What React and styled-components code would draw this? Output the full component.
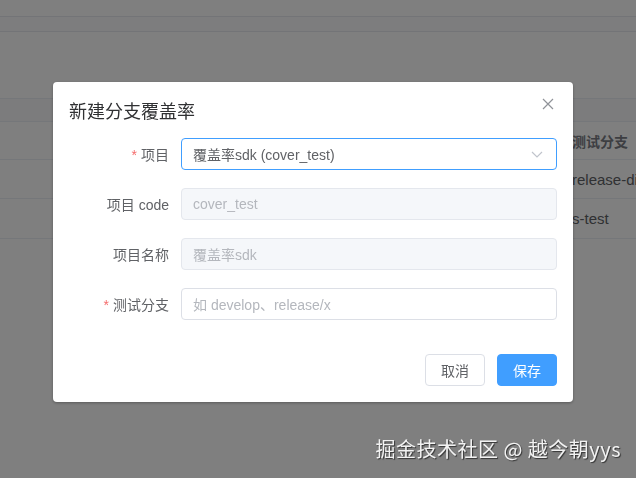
import styled, { createGlobalStyle } from "styled-components"

const GlobalStyle = createGlobalStyle`
    html, body {
        margin: 0;
        padding: 0;
        overflow: hidden;
        background: #fff;
        font-family: "Liberation Sans", "Noto Sans CJK SC", sans-serif;
    }
`

const Page = styled.div`
    width: 636px;
    height: 478px;
    background: #fff;
`
const TopBar = styled.div`
    height: 16px;
    border-bottom: 1px solid #e6e8ee;
`
const TabStrip = styled.div`
    height: 14px;
    border-bottom: 1px solid #e6e8ee;
    background: #fafbfc;
`
const Table = styled.div`
    margin-top: 66px;
    border-top: 1px solid #ebeef5;
`
const Row = styled.div`
    display: grid;
    grid-template-columns: 1fr 76px;
    height: ${(p) => p.$h}px;
    border-bottom: 1px solid #ebeef5;
    background: ${(p) => (p.$shade ? "#f8f9fb" : "#fff")};
`
const Cell = styled.div`
    display: flex;
    align-items: center;
    padding-left: 12px;
    overflow: hidden;
    white-space: nowrap;
    font-size: ${(p) => (p.$head ? 14 : 15)}px;
    color: ${(p) => (p.$head ? "#7a7d85" : "#606266")};
    font-weight: ${(p) => (p.$head ? 700 : 400)};
`

const Overlay = styled.div`
    position: fixed;
    inset: 0;
    background: rgba(0, 0, 0, 0.5);
`
const Dialog = styled.div`
    margin: 82px 0 0 53px;
    width: 520px;
    background: #fff;
    border-radius: 4px;
    box-shadow: 0 1px 3px rgba(0, 0, 0, 0.3);
`
const Header = styled.div`
    display: flex;
    justify-content: space-between;
    align-items: center;
    padding: 16px 16px 0;
`
const Title = styled.span`
    font-family: "Noto Sans CJK SC", sans-serif;
    font-size: 18px;
    line-height: 24px;
    color: #303133;
`
const CloseBtn = styled.button`
    border: none;
    background: none;
    padding: 0;
    margin-top: -12px;
    margin-right: 2px;
    width: 14px;
    height: 14px;
    display: flex;
    align-items: center;
    justify-content: center;
    cursor: pointer;
`
const Body = styled.div`
    padding: 16px 16px 0;
`
const FormRow = styled.div`
    display: flex;
    align-items: center;
    margin-bottom: 18px;
`
const Label = styled.label`
    flex: 0 0 112px;
    box-sizing: border-box;
    padding-right: 12px;
    text-align: right;
    font-size: 14px;
    color: #606266;
    font-family: "Liberation Sans", "Noto Sans CJK SC", sans-serif;
`
const Star = styled.span`
    color: #f56c6c;
    margin-right: 4px;
`
const Field = styled.div`
    flex: 1;
    height: 32px;
    box-sizing: border-box;
    display: flex;
    align-items: center;
    justify-content: space-between;
    padding: 0 12px 0 11px;
    border: 1px solid ${(p) => (p.$focus ? "#409eff" : p.$disabled ? "#e4e7ed" : "#dcdfe6")};
    background: ${(p) => (p.$disabled ? "#f5f7fa" : "#fff")};
    border-radius: 4px;
    font-size: 14px;
    color: ${(p) => (p.$muted ? "#b4b7bd" : "#606266")};
`
const Footer = styled.div`
    display: flex;
    justify-content: flex-end;
    gap: 12px;
    padding: 16px 16px 16px;
`
const Button = styled.button`
    width: 60px;
    height: 32px;
    border-radius: 4px;
    font-size: 14px;
    font-family: "Noto Sans CJK SC", sans-serif;
    border: 1px solid ${(p) => (p.$primary ? "#409eff" : "#dcdfe6")};
    background: ${(p) => (p.$primary ? "#409eff" : "#fff")};
    color: ${(p) => (p.$primary ? "#fff" : "#606266")};
    cursor: pointer;
`
const Watermark = styled.div`
    position: fixed;
    right: 15px;
    bottom: 15px;
    font-family: "Noto Sans CJK SC", sans-serif;
    font-size: 20px;
    letter-spacing: 0.5px;
    color: #f2f2f2;
    text-shadow: 1px 1px 1px rgba(0, 0, 0, 0.6);
`

function App() {
    return (
        <>
            <GlobalStyle />
            <Page>
                <TopBar />
                <TabStrip />
                <Table>
                    <Row $h={22} $shade><Cell /><Cell /></Row>
                    <Row $h={37}><Cell $head /><Cell $head>测试分支</Cell></Row>
                    <Row $h={38}><Cell /><Cell>release-dist</Cell></Row>
                    <Row $h={39}><Cell /><Cell>s-test</Cell></Row>
                </Table>
            </Page>
            <Overlay>
                <Dialog>
                    <Header>
                        <Title>新建分支覆盖率</Title>
                        <CloseBtn aria-label="close">
                            <svg width="12" height="12" viewBox="0 0 12 12">
                                <path d="M1 1L11 11M11 1L1 11" stroke="#909399" strokeWidth="1.2" />
                            </svg>
                        </CloseBtn>
                    </Header>
                    <Body>
                        <FormRow>
                            <Label><Star>*</Star>项目</Label>
                            <Field $focus>
                                <span>覆盖率sdk (cover_test)</span>
                                <svg width="14" height="14" viewBox="0 0 14 14">
                                    <path d="M2 5L7 10L12 5" fill="none" stroke="#c0c4cc" strokeWidth="1.2" />
                                </svg>
                            </Field>
                        </FormRow>
                        <FormRow>
                            <Label>项目 code</Label>
                            <Field $disabled $muted>cover_test</Field>
                        </FormRow>
                        <FormRow>
                            <Label>项目名称</Label>
                            <Field $disabled $muted>覆盖率sdk</Field>
                        </FormRow>
                        <FormRow>
                            <Label><Star>*</Star>测试分支</Label>
                            <Field $muted>如 develop、release/x</Field>
                        </FormRow>
                    </Body>
                    <Footer>
                        <Button>取消</Button>
                        <Button $primary>保存</Button>
                    </Footer>
                </Dialog>
            </Overlay>
            <Watermark>掘金技术社区 @ 越今朝yys</Watermark>
        </>
    )
}

export default App
